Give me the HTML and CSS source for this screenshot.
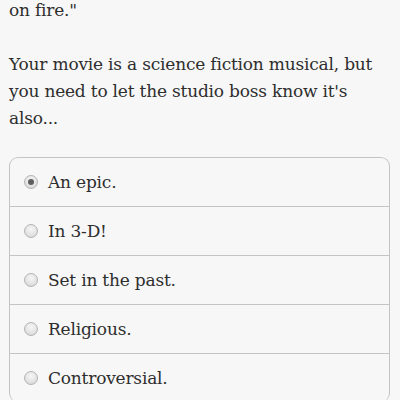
FILE: index.html
```html
<!DOCTYPE html>
<html>
<head>
<meta charset="utf-8">
<link rel="stylesheet" href="styles.css">
</head>
<body>
<div class="page">
  <p class="quote">on fire."</p>
  <p class="question">Your movie is a science fiction musical, but you need to let the studio boss know it's also...</p>
  <ul class="choices">
    <li class="choice"><span class="radio checked"></span><span class="label">An epic.</span></li>
    <li class="choice"><span class="radio"></span><span class="label">In 3-D!</span></li>
    <li class="choice"><span class="radio"></span><span class="label">Set in the past.</span></li>
    <li class="choice"><span class="radio"></span><span class="label">Religious.</span></li>
    <li class="choice"><span class="radio"></span><span class="label">Controversial.</span></li>
  </ul>
</div>
</body>
</html>
```
FILE: styles.css
```css
html, body {
  margin: 0;
  padding: 0;
  background: #f7f7f7;
}
body {
  font-family: "DejaVu Serif", serif;
  color: #2e2e2e;
  font-size: 17px;
  line-height: 27px;
  letter-spacing: -0.2px;
}
.page {
  padding: 0 10px 0 9px;
  margin-top: -3px;
}
p {
  margin: 0;
}
.quote {
  margin-bottom: 27px;
}
.question {
  margin-bottom: 25px;
}
.choices {
  list-style: none;
  margin: 0;
  padding: 0;
  border: 1px solid #c4c4c4;
  border-radius: 9px;
  border-bottom: none;
}
.choice {
  display: flex;
  align-items: center;
  height: 48px;
  border-top: 1px solid #c4c4c4;
  padding-left: 14px;
}
.choice:first-child {
  border-top: none;
}
.radio {
  width: 12px;
  height: 12px;
  border-radius: 50%;
  border: 1px solid #b4b4b4;
  background: radial-gradient(circle at 50% 35%, #f6f6f6 0%, #e2e2e2 60%, #cfcfcf 100%);
  box-sizing: content-box;
  margin-right: 10px;
  position: relative;
  flex: none;
}
.radio.checked::after {
  content: "";
  position: absolute;
  left: 3px;
  top: 3px;
  width: 6px;
  height: 6px;
  border-radius: 50%;
  background: #5e5e5e;
}
.label {
  display: block;
}
```
